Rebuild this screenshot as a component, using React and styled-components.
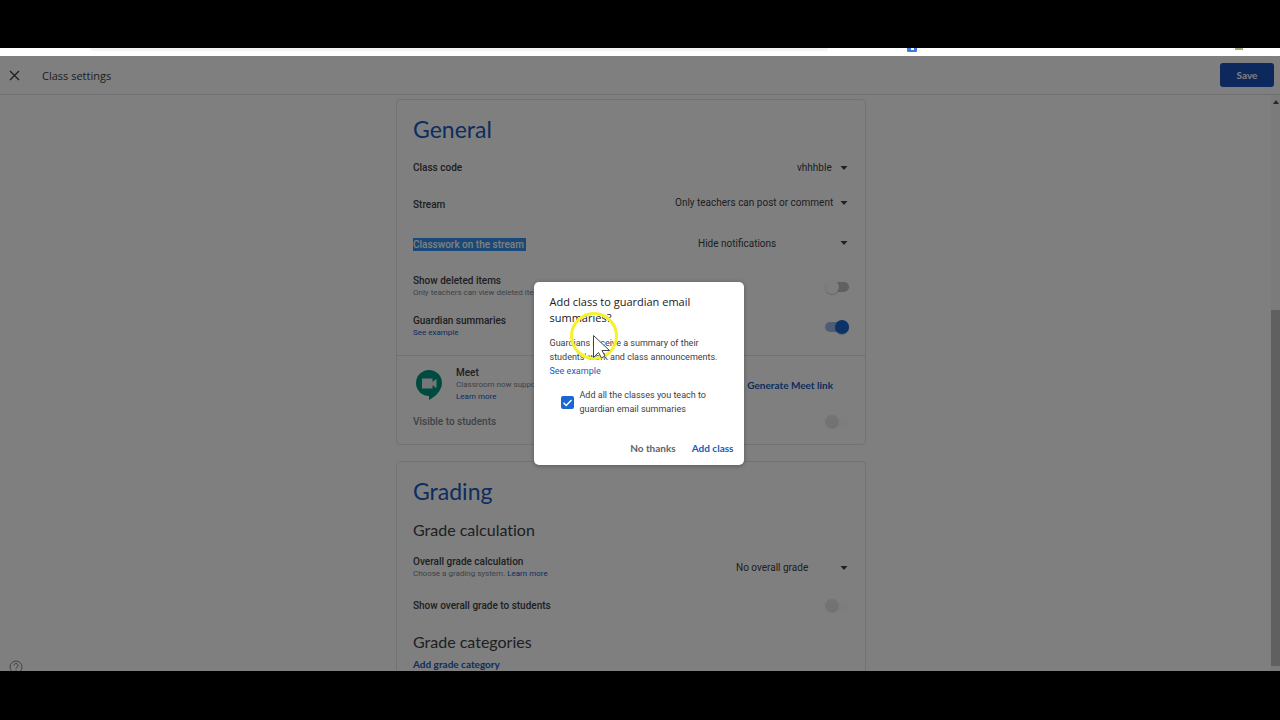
import React from "react";
import styled, { createGlobalStyle } from "styled-components";

const GlobalStyle = createGlobalStyle`
  * {
    box-sizing: border-box;
  }
  body {
    margin: 0;
    background: #000;
    font-family: Roboto, "Liberation Sans", sans-serif;
    font-size: 10px;
    color: #3c4043;
  }
  button,
  select {
    font: inherit;
    color: inherit;
    border: none;
    background: none;
    padding: 0;
    cursor: pointer;
  }
`;

const Screen = styled.div`
  height: 100vh;
  padding: 48px 0 49px;
  display: flex;
  flex-direction: column;
`;

const BrowserStrip = styled.div`
  height: 8px;
  flex-shrink: 0;
  padding: 0 37px 0 90px;
  display: flex;
  background: #fff;
  .address {
    width: 64%;
    height: 3px;
    border-radius: 0 0 4px 4px;
    background: #f1f3f4;
  }
  .extension {
    width: 10px;
    height: 4px;
    margin-left: auto;
    border-radius: 0 0 1px 1px;
    background: #3b7ae0;
    display: flex;
    justify-content: center;
    i {
      width: 3px;
      height: 2px;
      background: #fff;
    }
  }
  .avatar {
    width: 8px;
    height: 2px;
    margin-left: 318px;
    background: #a8a878;
  }
`;

const Page = styled.div`
  position: relative;
  flex: 1;
  min-height: 0;
  display: flex;
  flex-direction: column;
  overflow: hidden;
  background: #fff;
`;

const Header = styled.header`
  height: 39px;
  flex-shrink: 0;
  padding: 0 6px 0 9px;
  display: flex;
  align-items: center;
  border-bottom: 1px solid #dedede;
  h1 {
    margin: 0 auto 0 22px;
    font-family: "Open Sans", sans-serif;
    font-size: 11px;
    font-weight: 500;
  }
`;

const CloseButton = styled.button`
  display: flex;
  color: #3c4043;
`;

const SaveButton = styled.button`
  width: 54px;
  height: 24px;
  border-radius: 3px;
  background: #1850b8;
  color: #fff;
  font-family: Lato, sans-serif;
  font-weight: 700;
`;

const Body = styled.div`
  flex: 1;
  min-height: 0;
  display: flex;
`;

const Content = styled.main`
  flex: 1;
  min-width: 0;
  padding: 4px 9px 0 0;
  display: flex;
  flex-direction: column;
  align-items: center;
  gap: 16px;
  overflow: hidden;
`;

const Scrollbar = styled.div`
  width: 9px;
  display: flex;
  flex-direction: column;
  align-items: center;
  background: #f6f6f6;
  svg {
    margin-top: 5px;
  }
  span {
    width: 100%;
    flex: 0 1 356px;
    margin: auto 0 5px;
    background: #c1c1c1;
  }
`;

const Card = styled.section`
  width: 100%;
  max-width: 470px;
  flex-shrink: 0;
  padding: 15px 16px;
  border: 1px solid #e4e4e4;
  border-radius: 4px;
`;

const CardTitle = styled.h2`
  margin: 0 0 6px;
  font-family: Lato, sans-serif;
  font-size: 23px;
  line-height: 28px;
  font-weight: 400;
  color: #185abc;
`;

const SubTitle = styled.h3`
  margin: 0;
  font-family: Lato, sans-serif;
  font-size: 16px;
  line-height: ${({ $height }) => $height}px;
  font-weight: 400;
  font-variant-ligatures: none;
`;

const Row = styled.div`
  min-height: ${({ $height }) => $height || 40}px;
  display: flex;
  align-items: center;
  justify-content: space-between;
`;

const Label = styled.label`
  display: block;
  line-height: 12px;
  font-weight: 500;
  color: ${({ $muted }) => ($muted ? "#80868b" : "#3c4043")};
  mark {
    padding: 1px 2px 1px 0;
    background: #3092f0;
    color: #fff;
  }
`;

const Hint = styled.div`
  font-size: 8px;
  line-height: 12px;
  color: #80868b;
`;

const Link = styled.a`
  color: #185abc;
  text-decoration: none;
`;

const SelectBox = styled.div`
  display: flex;
  align-items: center;
  width: ${({ $width }) => $width}px;
  margin-right: 1px;
  padding-bottom: ${({ $raised }) => ($raised ? 4 : 0)}px;
  select {
    flex: 1;
    min-width: 0;
    height: 20px;
    appearance: none;
  }
`;

const Switch = styled.input.attrs({ type: "checkbox", role: "switch" })`
  appearance: none;
  display: flex;
  align-items: center;
  justify-content: ${({ checked }) => (checked ? "flex-end" : "flex-start")};
  width: 24px;
  height: 10px;
  margin: 0;
  border-radius: 5px;
  background: ${({ checked }) => (checked ? "#9dbbe8" : "#c0c0c0")};
  &::before {
    content: "";
    flex-shrink: 0;
    width: 14px;
    height: 14px;
    border-radius: 50%;
    background: ${({ checked }) => (checked ? "#1967d2" : "#fcfcfc")};
    box-shadow: 0 1px 1px rgba(0, 0, 0, 0.2);
  }
  &:disabled {
    background: #fafafa;
  }
  &:disabled::before {
    background: #e6e6e6;
    box-shadow: none;
  }
`;

const MeetSection = styled.div`
  margin: 8px -16px 0;
  padding: 0 16px;
  border-top: 1px solid #e4e4e4;
`;

const MeetInfo = styled.div`
  display: flex;
  align-items: center;
  gap: 14px;
  margin-left: 3px;
`;

const TextButton = styled.button`
  margin-right: ${({ $inset }) => ($inset ? 16 : 0)}px;
  font-family: Lato, sans-serif;
  font-size: 10px;
  line-height: 12px;
  font-weight: 700;
  color: ${({ $plain }) => ($plain ? "#5f6368" : "#185abc")};
`;

const HelpButton = styled.button`
  position: absolute;
  left: 9px;
  bottom: -3px;
  display: flex;
  color: #80868b;
`;

const Scrim = styled.div`
  position: absolute;
  inset: 0;
  padding: 20px 3px 0 0;
  display: flex;
  align-items: center;
  justify-content: center;
  background: rgba(0, 0, 0, 0.5);
`;

const Dialog = styled.div`
  position: relative;
  width: 210px;
  padding: 12px 10px 11px 16px;
  border-radius: 5px;
  background: #fff;
  font-size: 9px;
  box-shadow: 0 1px 5px rgba(0, 0, 0, 0.3);
  h2 {
    margin: 0 0 10px;
    font-family: "Open Sans", sans-serif;
    font-size: 11px;
    line-height: 16px;
    font-weight: 500;
    color: #202124;
  }
  p {
    margin: 0 0 10px;
    line-height: 14px;
  }
`;

const CheckRow = styled.label`
  display: flex;
  align-items: center;
  gap: 6px;
  margin-left: 11px;
  line-height: 14px;
  input {
    appearance: none;
    flex-shrink: 0;
    width: 13px;
    height: 13px;
    margin: 0;
    border-radius: 2px;
    background: #1967d2
      url("data:image/svg+xml,%3Csvg xmlns='http://www.w3.org/2000/svg' viewBox='0 0 13 13'%3E%3Cpath d='M2.5 6.8l2.7 2.7 5.3-5.6' fill='none' stroke='white' stroke-width='1.4'/%3E%3C/svg%3E");
  }
`;

const Actions = styled.div`
  display: flex;
  justify-content: flex-end;
  gap: 16px;
  margin-top: 26px;
`;

const Pointer = styled.svg`
  position: absolute;
  left: 34px;
  top: 28px;
  pointer-events: none;
`;

const Caret = () => (
  <svg width="8" height="4" viewBox="0 0 8 4" aria-hidden="true">
    <path d="M0.5 0h7L4 4z" fill="#3c4043" />
  </svg>
);

const Select = ({ id, value, width, raised }) => (
  <SelectBox $width={width} $raised={raised}>
    <select id={id} defaultValue={value}>
      <option>{value}</option>
    </select>
    <Caret />
  </SelectBox>
);

const Toggle = ({ id, checked = false, disabled }) => (
  <Switch id={id} checked={checked} disabled={disabled} readOnly />
);

const MeetLogo = () => (
  <svg width="26" height="30" viewBox="0 0 26 30" aria-hidden="true">
    <path
      d="M13 0a13 13 0 0 1 13 13c0 7-6 13.500-13 17v-4A13 13 0 1 1 13 0z"
      fill="#009680"
    />
    <path
      d="M6 8.500h10.500v3.500l4-3.200v9.400l-4-3.200v3.500H6z"
      fill="#e8efee"
    />
  </svg>
);

const GeneralCard = () => (
  <Card>
    <CardTitle>General</CardTitle>
    <Row $height={37}>
      <Label htmlFor="code">Class code</Label>
      <Select id="code" value="vhhhble" width={51} />
    </Row>
    <Row $height={37}>
      <Label htmlFor="stream">Stream</Label>
      <Select
        id="stream"
        value="Only teachers can post or comment"
        width={173}
        raised
      />
    </Row>
    <Row $height={44}>
      <Label htmlFor="classwork">
        <mark>Classwork on the stream</mark>
      </Label>
      <Select id="classwork" value="Hide notifications" width={150} raised />
    </Row>
    <Row>
      <div>
        <Label htmlFor="deleted">Show deleted items</Label>
        <Hint>Only teachers can view deleted items.</Hint>
      </div>
      <Toggle id="deleted" />
    </Row>
    <Row>
      <div>
        <Label htmlFor="guardian">Guardian summaries</Label>
        <Hint>
          <Link href="#example">See example</Link>
        </Hint>
      </div>
      <Toggle id="guardian" checked />
    </Row>
    <MeetSection>
      <Row $height={58}>
        <MeetInfo>
          <MeetLogo />
          <div>
            <Label as="div">Meet</Label>
            <Hint>Classroom now supports Meet</Hint>
            <Hint>
              <Link href="#meet">Learn more</Link>
            </Hint>
          </div>
        </MeetInfo>
        <TextButton $inset>Generate Meet link</TextButton>
      </Row>
      <Row $height={15}>
        <Label htmlFor="visible" $muted>
          Visible to students
        </Label>
        <Toggle id="visible" disabled />
      </Row>
    </MeetSection>
  </Card>
);

const GradingCard = () => (
  <Card>
    <CardTitle>Grading</CardTitle>
    <SubTitle $height={38}>Grade calculation</SubTitle>
    <Row $height={37}>
      <div>
        <Label htmlFor="overall">Overall grade calculation</Label>
        <Hint>
          Choose a grading system. <Link href="#grading">Learn more</Link>
        </Hint>
      </div>
      <Select id="overall" value="No overall grade" width={112} />
    </Row>
    <Row>
      <Label htmlFor="showOverall">Show overall grade to students</Label>
      <Toggle id="showOverall" disabled />
    </Row>
    <SubTitle $height={32}>Grade categories</SubTitle>
    <TextButton>Add grade category</TextButton>
  </Card>
);

const GuardianDialog = () => (
  <Dialog role="dialog" aria-labelledby="dialog-title">
    <h2 id="dialog-title">Add class to guardian email summaries?</h2>
    <p>
      Guardians receive a summary of their
      <br />
      students' work and class announcements.
      <br />
      <Link href="#example">See example</Link>
    </p>
    <CheckRow>
      <input type="checkbox" defaultChecked />
      <span>
        Add all the classes you teach to
        <br />
        guardian email summaries
      </span>
    </CheckRow>
    <Actions>
      <TextButton $plain>No thanks</TextButton>
      <TextButton>Add class</TextButton>
    </Actions>
    <Pointer width="52" height="52" viewBox="0 0 52 52" aria-hidden="true">
      <circle
        cx="26"
        cy="26"
        r="22.5"
        fill="none"
        stroke="#f6f12a"
        strokeWidth="3"
      />
      <path
        d="M25.500 25.500v22l5-5 3 5.500 3.500-2-3-5.500h7.500z"
        fill="#fff"
        stroke="#444"
        strokeWidth="1"
      />
    </Pointer>
  </Dialog>
);

const App = () => {
  return (
    <Screen>
      <GlobalStyle />
      <BrowserStrip>
        <div className="address" />
        <div className="extension">
          <i />
        </div>
        <div className="avatar" />
      </BrowserStrip>
      <Page>
        <Header>
          <CloseButton aria-label="Close">
            <svg width="11" height="11" viewBox="0 0 11 11">
              <path
                d="M1 1l9 9M10 1l-9 9"
                stroke="currentColor"
                strokeWidth="1.400"
              />
            </svg>
          </CloseButton>
          <h1>Class settings</h1>
          <SaveButton>Save</SaveButton>
        </Header>
        <Body>
          <Content>
            <GeneralCard />
            <GradingCard />
          </Content>
          <Scrollbar>
            <svg width="6" height="4" viewBox="0 0 6 4" aria-hidden="true">
              <path d="M0 4h6L3 0z" fill="#505050" />
            </svg>
            <span />
          </Scrollbar>
        </Body>
        <HelpButton aria-label="Help">
          <svg width="14" height="14" viewBox="0 0 14 14" fill="none">
            <circle cx="7" cy="7" r="6" stroke="currentColor" />
            <path
              d="M5 5.500a2 2 0 1 1 3 1.700c-.7.400-1 .8-1 1.600M7 10v1.200"
              stroke="currentColor"
            />
          </svg>
        </HelpButton>
        <Scrim>
          <GuardianDialog />
        </Scrim>
      </Page>
    </Screen>
  );
};

export default App;
